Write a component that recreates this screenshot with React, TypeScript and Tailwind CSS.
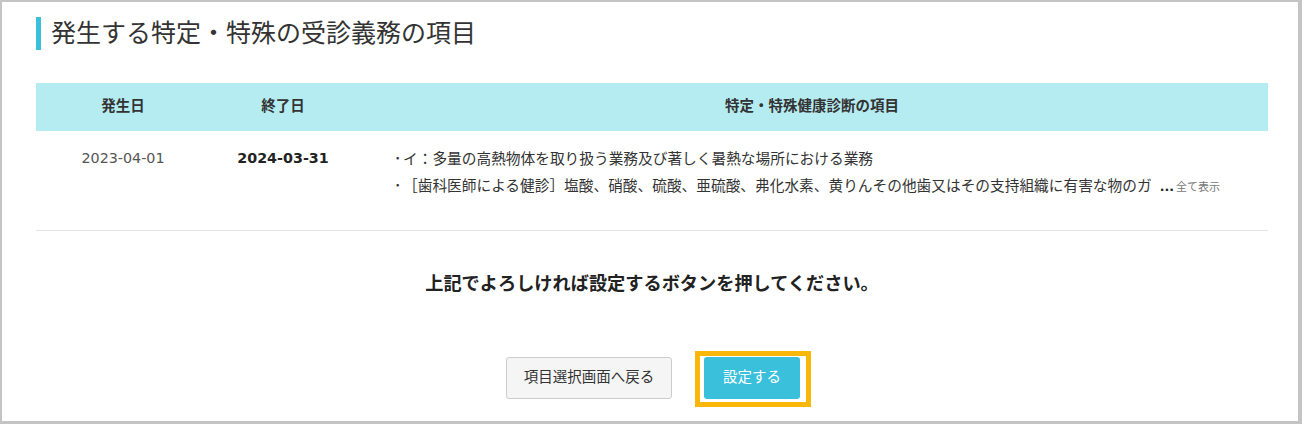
import React from "react";

const FONT = '"DejaVu Sans", "Noto Sans CJK JP", "Noto Sans", sans-serif';

export default function App() {
  return (
    <div
      className="w-[1302px] h-[424px] bg-white border-t-2 border-l-2 border-r-[4px] border-b-[3px] border-[#c4c4c4] overflow-hidden"
      style={{ fontFamily: FONT }}
    >
      <div className="pl-[34px] pr-[30px]">
        {/* Title */}
        <div className="mt-[15px] flex items-center h-[33px]">
          <div className="w-[5px] h-[33px] bg-[#3bc0dc]" />
          <h1 className="ml-[10px] text-[25px] leading-[33px] text-[#333333] font-normal">
            発生する特定・特殊の受診義務の項目
          </h1>
        </div>

        {/* Table */}
        <div className="mt-[33px] w-[1232px]">
          <div className="flex h-[48px] items-center bg-[#b5ecf2] text-[14.5px] font-bold text-[#333333]">
            <div className="w-[174px] text-center">発生日</div>
            <div className="w-[146px] text-center">終了日</div>
            <div className="flex-1 text-center">特定・特殊健康診断の項目</div>
          </div>
          <div className="flex h-[100px] border-b border-[#e3e3e3] pt-[14px] text-[14.7px] leading-[27px]">
            <div className="w-[174px] text-center text-[#555555] text-[14.3px]">2023-04-01</div>
            <div className="w-[146px] text-center font-bold text-[#222222] text-[14.3px]">2024-03-31</div>
            <div className="flex-1 min-w-0 pl-[38px] pr-[48px] text-[#333333]">
              <div className="flex">
                <span className="w-[9px] shrink-0">･</span>
                <span className="whitespace-nowrap">イ：多量の高熱物体を取り扱う業務及び著しく暑熱な場所における業務</span>
              </div>
              <div className="flex items-baseline">
                <span className="w-[9px] shrink-0">･</span>
                <span className="flex-1 min-w-0 overflow-hidden whitespace-nowrap">
                  ［歯科医師による健診］塩酸、硝酸、硫酸、亜硫酸、弗化水素、黄りんその他歯又はその支持組織に有害な物のガス、蒸気又は粉じんを発散する場所における業務
                </span>
                <span className="ml-[8px] shrink-0 font-bold text-[12.5px] text-[#222222]">...</span>
                <span className="ml-[2px] shrink-0 text-[11px] text-[#777777]">全て表示</span>
              </div>
            </div>
          </div>
        </div>

        {/* Message */}
        <p className="mt-[39px] w-[1232px] text-center text-[18.2px] leading-[27px] font-bold text-[#222222]">
          上記でよろしければ設定するボタンを押してください。
        </p>

        {/* Buttons */}
        <div className="mt-[60px] w-[1232px] flex justify-center gap-[32px] pl-[2px]">
          <button className="w-[166px] h-[42px] rounded-[3px] border border-[#cccccc] bg-[#f5f5f5] text-[14.5px] text-[#333333]">
            項目選択画面へ戻る
          </button>
          <button className="relative w-[96px] h-[42px] rounded-[3px] bg-[#3bc0dc] text-[14.5px] text-white">
            設定する
            <span className="pointer-events-none absolute -left-[9px] -top-[6px] -right-[11px] -bottom-[8px] border-[5px] border-[#fbb60a]" />
          </button>
        </div>
      </div>
    </div>
  );
}
